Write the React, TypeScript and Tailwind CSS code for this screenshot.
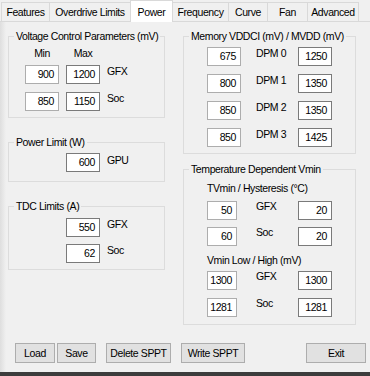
import React from "react";

const tabs = [
  { label: "Features", w: "w-[49px]" },
  { label: "Overdrive Limits", w: "w-[82px]" },
  { label: "Power", w: "w-[43px]", active: true },
  { label: "Frequency", w: "w-[57px]" },
  { label: "Curve", w: "w-[40px]" },
  { label: "Fan", w: "w-[41px]" },
  { label: "Advanced", w: "w-[52px]" },
];

function Box({ v, light, w = "w-[34px]" }: { v: string; light?: boolean; w?: string }) {
  return (
    <div
      className={`${w} h-[19px] shrink-0 bg-white border ${
        light ? "border-[#adadad]" : "border-[#7a7a7a]"
      } text-right pr-[4px] leading-[17px]`}
    >
      {v}
    </div>
  );
}

function Group({
  title,
  h,
  children,
}: {
  title: string;
  h: string;
  children: React.ReactNode;
}) {
  return (
    <fieldset className={`${h} border border-[#dcdcdc] flex flex-col`}>
      <legend className="ml-[5px] px-[2px] leading-[16px] whitespace-nowrap">{title}</legend>
      {children}
    </fieldset>
  );
}

function Btn({ label, w }: { label: string; w: string }) {
  return (
    <div
      className={`${w} h-[20px] bg-[#e1e1e1] border border-[#adadad] flex items-center justify-center leading-[16px] whitespace-nowrap`}
    >
      {label}
    </div>
  );
}

export default function App() {
  return (
    <div className="relative w-[370px] h-[376px] bg-[#f0f0f0] overflow-hidden flex flex-col text-[10.5px] text-black font-['Liberation_Sans',Arial,sans-serif] tracking-[-0.4px]">
      {/* tab strip */}
      <div className="h-[22px] shrink-0 flex items-end pl-[1px] border-b border-[#d9d9d9]">
        {tabs.map((t, i) =>
          t.active ? (
            <div
              key={t.label}
              className={`${t.w} h-[22px] -mb-px -ml-px bg-white border border-b-0 border-[#d9d9d9] flex items-start justify-center pt-[3px] leading-[16px] whitespace-nowrap`}
            >
              {t.label}
            </div>
          ) : (
            <div
              key={t.label}
              className={`${t.w} h-[19px] ${i === 0 ? "" : "-ml-px"} bg-[#f0f0f0] border border-b-0 border-[#d9d9d9] flex items-center justify-center leading-[16px] whitespace-nowrap`}
            >
              {t.label}
            </div>
          )
        )}
      </div>

      {/* tab page */}
      <div className="flex pt-[6px] pl-[8px] gap-[18px]">
        {/* left column */}
        <div className="w-[157px] flex flex-col gap-[16px]">
          <Group title="Voltage Control Parameters (mV)" h="h-[90px]">
            <div className="flex mt-[1px] pl-[16px] gap-[7px] leading-[16px]">
              <div className="w-[34px] text-center">Min</div>
              <div className="w-[34px] text-center">Max</div>
            </div>
            <div className="flex items-start mt-[4px] pl-[16px] gap-[7px]">
              <Box v="900" light />
              <Box v="1200" />
              <div className="-mt-[2px] leading-[16px]">GFX</div>
            </div>
            <div className="flex items-start mt-[8px] pl-[16px] gap-[7px]">
              <Box v="850" light />
              <Box v="1150" />
              <div className="-mt-[2px] leading-[16px]">Soc</div>
            </div>
          </Group>

          <Group title="Power Limit (W)" h="h-[48px]">
            <div className="flex items-start mt-[3px] pl-[57px] gap-[7px]">
              <Box v="600" />
              <div className="-mt-[1px] leading-[16px]">GPU</div>
            </div>
          </Group>

          <Group title="TDC Limits (A)" h="h-[72px]">
            <div className="flex items-start mt-[4px] pl-[57px] gap-[7px]">
              <Box v="550" />
              <div className="-mt-[2px] leading-[16px]">GFX</div>
            </div>
            <div className="flex items-start mt-[7px] pl-[57px] gap-[7px]">
              <Box v="62" />
              <div className="-mt-[2px] leading-[16px]">Soc</div>
            </div>
          </Group>
        </div>

        {/* right column */}
        <div className="w-[173px] flex flex-col gap-[7px]">
          <Group title="Memory VDDCI (mV) / MVDD (mV)" h="h-[126px]">
            <div className="flex flex-col gap-[8px] mt-[3px] pl-[23px]">
              {[
                ["675", "DPM 0", "1250"],
                ["800", "DPM 1", "1350"],
                ["850", "DPM 2", "1350"],
                ["850", "DPM 3", "1425"],
              ].map(([a, l, b]) => (
                <div key={l} className="flex items-start">
                  <Box v={a} light />
                  <div className="w-[57px] pl-[15px] -mt-[2px] leading-[16px]">{l}</div>
                  <Box v={b} />
                </div>
              ))}
            </div>
          </Group>

          <Group title="Temperature Dependent Vmin" h="h-[164px]">
            <div className="mt-[3px] pl-[23px] leading-[16px]">TVmin / Hysteresis (°C)</div>
            <div className="flex items-start mt-[5px] pl-[23px]">
              <Box v="50" light w="w-[30px]" />
              <div className="w-[61px] pl-[19px] -mt-[3px] leading-[16px]">GFX</div>
              <Box v="20" />
            </div>
            <div className="flex items-start mt-[7px] pl-[23px]">
              <Box v="60" light w="w-[30px]" />
              <div className="w-[61px] pl-[19px] -mt-[3px] leading-[16px]">Soc</div>
              <Box v="20" />
            </div>
            <div className="mt-[6px] pl-[23px] leading-[16px]">Vmin Low / High (mV)</div>
            <div className="flex items-start mt-[3px] pl-[23px]">
              <Box v="1300" light w="w-[30px]" />
              <div className="w-[61px] pl-[19px] -mt-[3px] leading-[16px]">GFX</div>
              <Box v="1300" />
            </div>
            <div className="flex items-start mt-[8px] pl-[23px]">
              <Box v="1281" light w="w-[30px]" />
              <div className="w-[61px] pl-[19px] -mt-[3px] leading-[16px]">Soc</div>
              <Box v="1281" />
            </div>
          </Group>
        </div>
      </div>

      {/* buttons */}
      <div className="flex mt-[18px] pl-[15px]">
        <Btn label="Load" w="w-[40px]" />
        <div className="ml-[2px]">
          <Btn label="Save" w="w-[39px]" />
        </div>
        <div className="ml-[10px]">
          <Btn label="Delete SPPT" w="w-[65px]" />
        </div>
        <div className="ml-[10px]">
          <Btn label="Write SPPT" w="w-[64px]" />
        </div>
        <div className="ml-[61px]">
          <Btn label="Exit" w="w-[60px]" />
        </div>
      </div>

      <div className="mt-auto h-[4px] shrink-0 bg-[#3c3c3c]" />

      <div className="pointer-events-none absolute left-0 top-[22px] bottom-[4px] w-[6px] bg-gradient-to-r from-[#dedede] to-transparent" />
    </div>
  );
}
